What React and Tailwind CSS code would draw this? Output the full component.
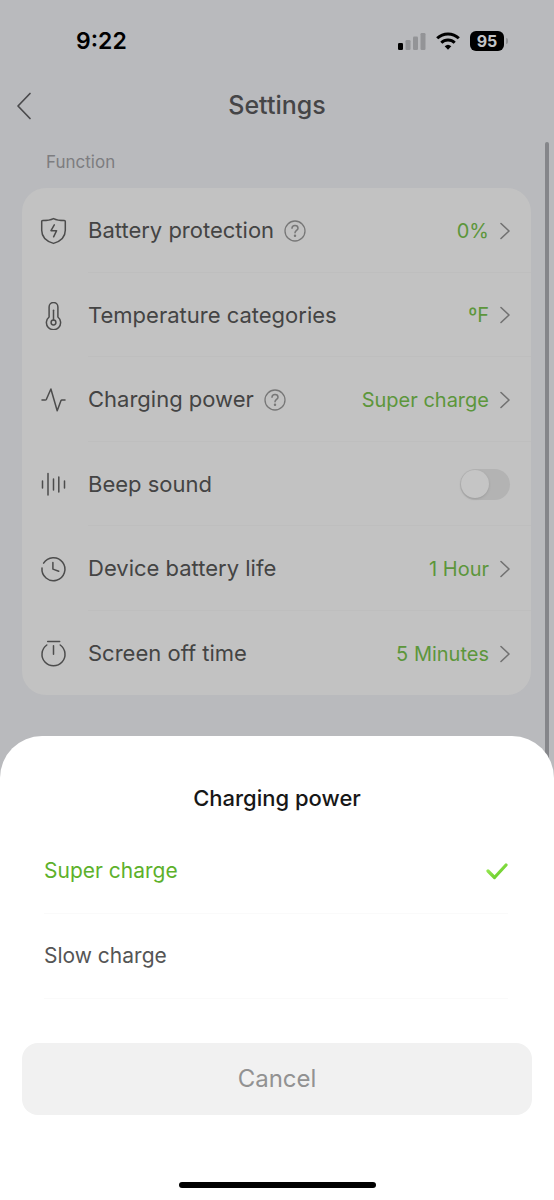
import { useState } from "react";

function ShieldBoltIcon() {
  return (
    <svg viewBox="0 0 28 28" className="size-7" fill="none" stroke="currentColor" strokeWidth="1.5" strokeLinecap="round" strokeLinejoin="round" aria-hidden="true">
      <path d="M13.500 1.600c3.200 1.600 7 2 10.800 2 .7 0 1 .3 1 1v8.600c0 6.300-4.500 11-11.800 13.200C6.200 24.200 1.700 19.500 1.700 13.200V4.600c0-.7.300-1 1-1 3.800 0 7.600-.4 10.800-2z" />
      <path d="M14.300 7.800l-3.300 5.900h5.600l-3 6.100" />
    </svg>
  );
}

function ThermometerIcon() {
  return (
    <svg viewBox="0 0 28 28" className="size-7" fill="none" stroke="currentColor" strokeWidth="1.500" strokeLinecap="round" aria-hidden="true">
      <path d="M9.100 15V4.900a4.400 4.400 0 0 1 8.800 0V15a7.100 7.100 0 1 1-8.800 0z" />
      <path d="M13.500 8.300v9.700" />
      <circle cx="13.500" cy="20.500" r="2.400" />
    </svg>
  );
}

function PulseIcon() {
  return (
    <svg viewBox="0 0 28 28" className="size-7" fill="none" stroke="currentColor" strokeWidth="1.500" strokeLinecap="round" strokeLinejoin="round" aria-hidden="true">
      <path d="M2 14h3.200c.6 0 .9-.2 1.200-.7L10.900 3l6.300 21.800 3.800-10.200c.2-.5.500-.7 1-.7h3" />
    </svg>
  );
}

function SoundIcon() {
  return (
    <svg viewBox="0 0 28 28" className="size-7" fill="none" stroke="currentColor" strokeWidth="1.500" strokeLinecap="round" aria-hidden="true">
      <path d="M2.500 10v7M8 2.500v21.500M13.500 8v11M18.800 6v15M24.500 10v7" />
    </svg>
  );
}

function ClockIcon() {
  return (
    <svg viewBox="0 0 28 28" className="size-7" fill="none" stroke="currentColor" strokeWidth="1.500" strokeLinecap="round" strokeLinejoin="round" aria-hidden="true">
      <path d="M3.600 8.200A11.500 11.500 0 1 1 2 13" />
      <path d="M12.900 7.400v6.700l5.800 2.200" />
    </svg>
  );
}

function TimerIcon() {
  return (
    <svg viewBox="0 0 28 28" className="size-7" fill="none" stroke="currentColor" strokeWidth="1.500" strokeLinecap="round" aria-hidden="true">
      <path d="M7.700 1.500h12M13.500 5.800v8.500" />
      <path d="M20.200 5a11.500 11.500 0 1 1-13.400 0" />
    </svg>
  );
}

function ChevronRight() {
  return (
    <svg viewBox="0 0 10 18" className="h-[18px] w-[10px]" fill="none" stroke="#717171" strokeWidth="1.600" strokeLinecap="round" strokeLinejoin="round" aria-hidden="true">
      <path d="M1 1.500L9 9l-8 7.500" />
    </svg>
  );
}

function HelpIcon() {
  return (
    <svg viewBox="0 0 22 22" className="size-[22px]" fill="none" stroke="currentColor" strokeWidth="1.300" strokeLinecap="round" strokeLinejoin="round" aria-hidden="true">
      <circle cx="11" cy="11" r="10" />
      <path d="M8 8.300c0-1.700 1.300-2.800 3-2.800s3 1.100 3 2.700c0 2.100-3 2.400-3 4.600" strokeWidth="1.500" />
      <circle cx="11" cy="15.800" r=".600" fill="currentColor" />
    </svg>
  );
}

function StatusBar() {
  return (
    <header className="flex h-[82px] items-center justify-between pr-[46px] pl-[76px] text-black">
      <span className="text-[23px] font-semibold">9:22</span>
      <div className="flex items-center gap-[10px]">
        <svg viewBox="0 0 28 18" className="h-[18px] w-[28px]" role="img" aria-label="Signal strength">
          <rect x="0" y="11" width="5" height="7" rx="1.300" fill="#000" />
          <rect x="7.500" y="8" width="5" height="10" rx="1.300" fill="#939497" />
          <rect x="15" y="4.500" width="5" height="13.500" rx="1.300" fill="#939497" />
          <rect x="22.500" y="1" width="5" height="17" rx="1.300" fill="#939497" />
        </svg>
        <svg viewBox="0 0 24 18" className="h-[18px] w-[24px]" fill="none" stroke="#000" strokeWidth="3" role="img" aria-label="Wi-Fi">
          <path d="M1.200 6.300a15.400 15.400 0 0 1 21.600 0" />
          <path d="M5.300 10.700a9.600 9.600 0 0 1 13.400 0" />
          <path d="M8.700 14.200a4.900 4.900 0 0 1 6.600 0L12 17.700z" fill="#000" stroke="none" />
        </svg>
        <div className="flex items-center gap-[2px]">
          <span className="flex h-5 w-[34px] items-center justify-center rounded-md bg-black text-base leading-5 font-bold text-[#c4c5c8]">95</span>
          <span className="h-[6px] w-[2px] rounded-r-full bg-[#939497]" />
        </div>
      </div>
    </header>
  );
}

function SettingRow({ icon, label, help, last, children }) {
  return (
    <li className="flex items-stretch pt-[2px] pl-[18px]">
      <span className="flex w-12 items-center text-[#4c4c4c]">{icon}</span>
      <div className={`flex grow items-center justify-between pr-[21px] ${last ? "" : "border-b border-[#bebebe]"}`}>
        <div className="flex items-center gap-[10px] text-[22px] text-[#444444]">
          {label}
          {help && (
            <button type="button" aria-label={help} className="text-[#777777]">
              <HelpIcon />
            </button>
          )}
        </div>
        {children}
      </div>
    </li>
  );
}

function ValueButton({ children }) {
  return (
    <button type="button" className="flex items-center gap-[11px] text-xl text-[#5c963b]">
      {children}
      <ChevronRight />
    </button>
  );
}

function CheckIcon() {
  return (
    <svg viewBox="0 0 22 18" className="hidden h-[18px] w-[22px] peer-checked:block" fill="none" strokeLinecap="round" strokeLinejoin="round" aria-hidden="true">
      <defs>
        <linearGradient id="tick" x1="0" y1="0" x2="1" y2="1">
          <stop offset="0" stopColor="#a2ee5c" />
          <stop offset="1" stopColor="#5cc51e" />
        </linearGradient>
      </defs>
      <path d="M2 9l6.500 6.500L20 3" stroke="url(#tick)" strokeWidth="3.200" />
    </svg>
  );
}

function PowerOption({ value, selected, onSelect }) {
  return (
    <label className="relative flex h-[85px] cursor-pointer items-center justify-between border-b border-[#fafafa] text-[21px] text-[#555555] has-checked:text-[#5db12b]">
      {value}
      <input type="radio" name="power" value={value} checked={selected} onChange={() => onSelect(value)} className="peer sr-only" />
      <CheckIcon />
    </label>
  );
}

export default function App() {
  const [power, setPower] = useState("Super charge");
  const [beep, setBeep] = useState(false);

  return (
    <div className="relative min-h-screen bg-[#b9babd] pb-[464px] font-['Inter',sans-serif]">
      <StatusBar />
      <main>
        <div className="grid h-12 grid-cols-[1fr_auto_1fr] items-center px-4">
          <button type="button" aria-label="Back" className="justify-self-start text-[#4a4a4c]">
            <svg viewBox="0 0 16 28" className="h-7 w-4" fill="none" stroke="currentColor" strokeWidth="1.700" strokeLinecap="round" strokeLinejoin="round" aria-hidden="true">
              <path d="M14 1.500L2 14l12 12.500" />
            </svg>
          </button>
          <h1 className="text-[25px] font-medium text-[#454547]">Settings</h1>
        </div>
        <h2 className="flex h-[58px] items-center px-[46px] pt-2 text-[17px] text-[#7d7d80]">Function</h2>
        <ul className="mr-[23px] ml-[22px] grid min-h-[507px] auto-rows-fr rounded-3xl bg-[#c2c2c2]">
          <SettingRow icon={<ShieldBoltIcon />} label="Battery protection" help="About battery protection">
            <ValueButton>0%</ValueButton>
          </SettingRow>
          <SettingRow icon={<ThermometerIcon />} label="Temperature categories">
            <ValueButton>ºF</ValueButton>
          </SettingRow>
          <SettingRow icon={<PulseIcon />} label="Charging power" help="About charging power">
            <ValueButton>{power}</ValueButton>
          </SettingRow>
          <SettingRow icon={<SoundIcon />} label={<label htmlFor="beep">Beep sound</label>}>
            <input
              id="beep"
              type="checkbox"
              role="switch"
              checked={beep}
              onChange={(e) => setBeep(e.target.checked)}
              className="flex h-[31px] w-[50px] appearance-none items-center rounded-full bg-[#b3b3b3] px-px before:size-7 before:rounded-full before:bg-[#c5c5c5] before:shadow-sm checked:justify-end checked:bg-[#5c963b]"
            />
          </SettingRow>
          <SettingRow icon={<ClockIcon />} label="Device battery life">
            <ValueButton>1 Hour</ValueButton>
          </SettingRow>
          <SettingRow icon={<TimerIcon />} label="Screen off time" last>
            <ValueButton>5 Minutes</ValueButton>
          </SettingRow>
        </ul>
      </main>

      <div className="absolute top-[142px] right-[5px] bottom-0 w-1 rounded-full bg-[#85868a]" aria-hidden="true" />

      <section role="dialog" aria-labelledby="sheet-title" className="fixed inset-x-0 bottom-0 rounded-t-[42px] bg-white">
        <h2 id="sheet-title" className="pt-[46px] pb-[15px] text-center text-[22px] leading-8 font-medium text-[#171717]">
          Charging power
        </h2>
        <div role="radiogroup" aria-labelledby="sheet-title" className="pr-[46px] pl-11">
          <PowerOption value="Super charge" selected={power === "Super charge"} onSelect={setPower} />
          <PowerOption value="Slow charge" selected={power === "Slow charge"} onSelect={setPower} />
        </div>
        <div className="px-[22px] pt-11">
          <button type="button" className="h-[72px] w-full rounded-2xl bg-[#f1f1f1] text-2xl text-[#929292]">
            Cancel
          </button>
        </div>
        <div className="flex justify-center pt-[67px] pb-3">
          <span className="h-[6px] w-[197px] rounded-full bg-black" />
        </div>
      </section>
    </div>
  );
}
